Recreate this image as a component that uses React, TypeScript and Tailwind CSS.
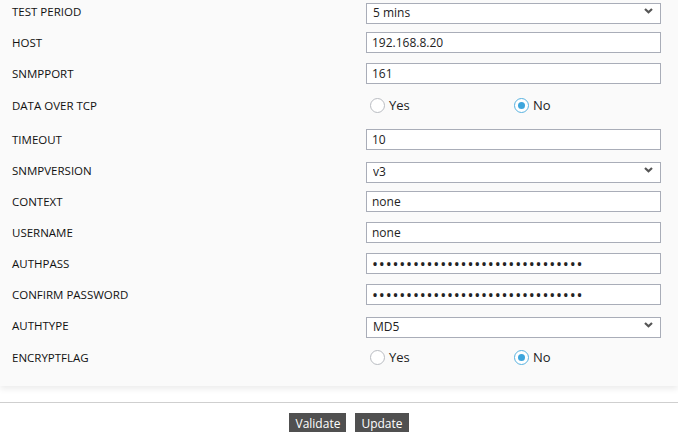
import React, {useState} from "react";

type Row =
    | {label: string; kind: "text"; value: string; gap: string}
    | {label: string; kind: "password"; value: string; gap: string}
    | {label: string; kind: "select"; value: string; options: string[]; gap: string}
    | {label: string; kind: "radio"; value: string; gap: string};

const rows: Row[] = [
    {label: "TEST PERIOD", kind: "select", value: "5 mins", options: ["1 min", "5 mins", "10 mins", "15 mins"], gap: "mt-px"},
    {label: "HOST", kind: "text", value: "192.168.8.20", gap: "mt-[10px]"},
    {label: "SNMPPORT", kind: "text", value: "161", gap: "mt-[10px]"},
    {label: "DATA OVER TCP", kind: "radio", value: "No", gap: "mt-[11px]"},
    {label: "TIMEOUT", kind: "text", value: "10", gap: "mt-[13px]"},
    {label: "SNMPVERSION", kind: "select", value: "v3", options: ["v1", "v2", "v3"], gap: "mt-[10px]"},
    {label: "CONTEXT", kind: "text", value: "none", gap: "mt-[10px]"},
    {label: "USERNAME", kind: "text", value: "none", gap: "mt-[10px]"},
    {label: "AUTHPASS", kind: "password", value: "a".repeat(31), gap: "mt-[10px]"},
    {label: "CONFIRM PASSWORD", kind: "password", value: "a".repeat(31), gap: "mt-[10px]"},
    {label: "AUTHTYPE", kind: "select", value: "MD5", options: ["MD5", "SHA"], gap: "mt-[10px]"},
    {label: "ENCRYPTFLAG", kind: "radio", value: "No", gap: "mt-[11px]"},
];

const boxClass =
    "h-[21px] w-[295px] border border-[#a9adb8] bg-white px-[5px] text-[#222] outline-none";

function RadioDot({checked}: {checked: boolean}) {
    return (
        <span
            className={`flex h-[15px] w-[15px] items-center justify-center rounded-full border bg-white ${
                checked ? "border-[#58b2e0]" : "border-[#b9bcc2]"
            }`}
        >
            {checked && <span className="h-[7px] w-[7px] rounded-full bg-[#3da5dc]"/>}
        </span>
    );
}

function RadioPair({value, onChange}: {value: string; onChange: (v: string) => void}) {
    return (
        <div className="flex h-[21px] items-center pl-[4px] text-[13px] text-[#222]">
            <button type="button" className="flex w-[144px] items-center gap-[4px]" onClick={() => onChange("Yes")}>
                <RadioDot checked={value === "Yes"}/>
                <span>Yes</span>
            </button>
            <button type="button" className="flex items-center gap-[4px]" onClick={() => onChange("No")}>
                <RadioDot checked={value === "No"}/>
                <span>No</span>
            </button>
        </div>
    );
}

function Field({row}: {row: Row}) {
    const [val, setVal] = useState(row.value);

    if (row.kind === "radio") {
        return <RadioPair value={val} onChange={setVal}/>;
    }

    if (row.kind === "select") {
        return (
            <div className="relative w-[295px]">
                <select
                    value={val}
                    onChange={(e) => setVal(e.target.value)}
                    className={`${boxClass} appearance-none pl-[6px] text-[12px]`}
                >
                    {row.options.map((o) => (
                        <option key={o}>{o}</option>
                    ))}
                </select>
                {/* chevron sits over the select */}
                <svg
                    className="pointer-events-none absolute right-[8px] top-[9px]"
                    width="9"
                    height="6"
                    viewBox="0 0 9 6"
                >
                    <path d="M1 1 L4.5 4.3 L8 1" fill="none" stroke="#555" strokeWidth="2.2"/>
                </svg>
            </div>
        );
    }

    return (
        <input
            type={row.kind}
            value={val}
            onChange={(e) => setVal(e.target.value)}
            className={`${boxClass} ${row.kind === "password" ? "text-[16px] tracking-[0.8px]" : "text-[12px]"}`}
        />
    );
}

export default function App() {
    return (
        <div className="min-h-screen bg-white" style={{fontFamily: "'Open Sans', 'Noto Sans', sans-serif"}}>
            <div className="flex flex-col bg-[#fafafa] pb-[18px] shadow-[0_3px_6px_rgba(0,0,0,0.08)]">
                {rows.map((row) => (
                    <div key={row.label} className={`flex h-[21px] items-center ${row.gap}`}>
                        <span className="w-[366px] pl-[12px] pt-px text-[11.5px] text-[#111]">{row.label}</span>
                        <Field row={row}/>
                    </div>
                ))}
            </div>

            <div className="mt-[16px] border-t border-[#cfcfcf]"/>

            <div className="mt-[10px] flex justify-center gap-[9px] pl-[20px]">
                <button type="button" className="h-[22px] bg-[#505050] px-[6px] text-[12px] text-white">
                    Validate
                </button>
                <button type="button" className="h-[22px] bg-[#505050] px-[6px] text-[12px] text-white">
                    Update
                </button>
            </div>
        </div>
    );
}
